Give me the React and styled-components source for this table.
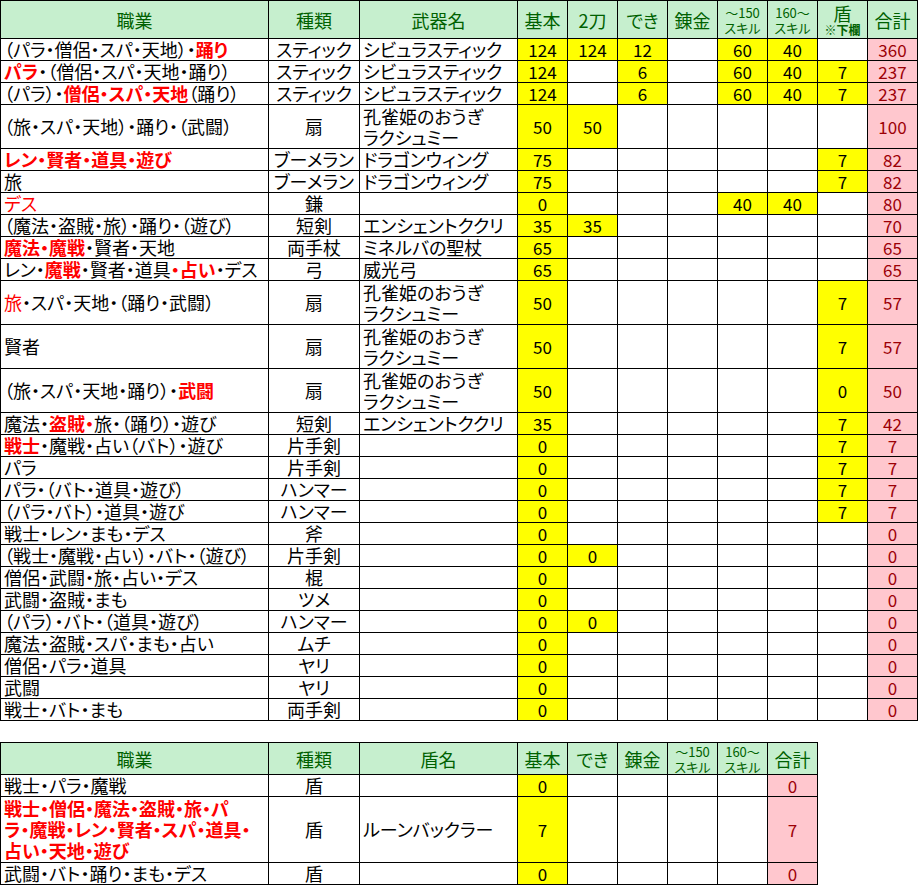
import styled, { createGlobalStyle } from 'styled-components';

const GlobalStyle = createGlobalStyle`
  body {
    margin: 0;
    background: #fff;
    font-family: "Noto Sans CJK JP", "Noto Sans", sans-serif;
    font-feature-settings: "palt";
    color: #000;
  }
`;

const Page = styled.div`
  display: flex;
  flex-direction: column;
  align-items: flex-start;
  gap: 21px;
`;

const Sheet = styled.table`
  border-collapse: collapse;
  table-layout: fixed;
`;

const HeadCell = styled.th`
  background: #c6efce;
  color: #006100;
  font-weight: normal;
  font-size: 18px;
  line-height: 20px;
  height: ${p => p.$h || 38}px;
  box-sizing: border-box;
  padding: 0;
  border: 1px solid #000;
  text-align: center;
  vertical-align: middle;
  white-space: nowrap;
`;

const Small = styled.span`
  display: block;
  font-size: 13px;
  line-height: 15px;
`;

const Note = styled.span`
  display: block;
  font-size: 12px;
  line-height: 14px;
  font-weight: bold;
`;

const fills = {
  yellow: '#ffff00',
  pink: '#ffc7ce',
  white: '#fff',
};

const Cell = styled.td`
  border: 1px solid #000;
  box-sizing: border-box;
  height: ${p => p.$h}px;
  padding: 0 ${p => (p.$align === 'center' ? 0 : 3)}px;
  font-size: 18px;
  line-height: 21px;
  text-align: ${p => p.$align || 'left'};
  vertical-align: middle;
  background: ${p => fills[p.$fill || 'white']};
  white-space: pre;
`;

const NumCell = styled(Cell)`
  font-size: 17px;
  text-align: center;
  padding: 0;
  color: ${p => (p.$total ? '#9c0006' : '#000')};
`;

const Red = styled.span`
  color: #ff0000;
  font-weight: ${p => (p.$thin ? 'normal' : 'bold')};
`;

// **...** = red bold, ~~...~~ = red normal
const Job = ({ text }) => {
  const parts = text.split(/(\*\*[^*]+\*\*|~~[^~]+~~)/);
  return parts.map((p, i) => {
    if (p.startsWith('**')) return <Red key={i}>{p.slice(2, -2)}</Red>;
    if (p.startsWith('~~')) return <Red key={i} $thin>{p.slice(2, -2)}</Red>;
    return p;
  });
};

const KUJAKU = '孔雀姫のおうぎ\nラクシュミー';
const _ = null;

const weapons = [
  { job: '（パラ・僧侶・スパ・天地）・**踊り**', type: 'スティック', name: 'シビュラスティック', v: [124, 124, 12, _, 60, 40, _], total: 360 },
  { job: '**パラ**・（僧侶・スパ・天地・踊り）', type: 'スティック', name: 'シビュラスティック', v: [124, _, 6, _, 60, 40, 7], total: 237 },
  { job: '（パラ）・**僧侶・スパ・天地**（踊り）', type: 'スティック', name: 'シビュラスティック', v: [124, _, 6, _, 60, 40, 7], total: 237 },
  { job: '（旅・スパ・天地）・踊り・（武闘）', type: '扇', name: KUJAKU, v: [50, 50, _, _, _, _, _], total: 100, lines: 2 },
  { job: '**レン・賢者・道具・遊び**', type: 'ブーメラン', name: 'ドラゴンウィング', v: [75, _, _, _, _, _, 7], total: 82 },
  { job: '旅', type: 'ブーメラン', name: 'ドラゴンウィング', v: [75, _, _, _, _, _, 7], total: 82 },
  { job: '~~デス~~', type: '鎌', name: '', v: [0, _, _, _, 40, 40, _], total: 80 },
  { job: '（魔法・盗賊・旅）・踊り・（遊び）', type: '短剣', name: 'エンシェントククリ', v: [35, 35, _, _, _, _, _], total: 70 },
  { job: '**魔法・魔戦**・賢者・天地', type: '両手杖', name: 'ミネルバの聖杖', v: [65, _, _, _, _, _, _], total: 65 },
  { job: 'レン・**魔戦**・賢者・道具**・占い**・デス', type: '弓', name: '威光弓', v: [65, _, _, _, _, _, _], total: 65 },
  { job: '~~旅~~・スパ・天地・（踊り・武闘）', type: '扇', name: KUJAKU, v: [50, _, _, _, _, _, 7], total: 57, lines: 2 },
  { job: '賢者', type: '扇', name: KUJAKU, v: [50, _, _, _, _, _, 7], total: 57, lines: 2 },
  { job: '（旅・スパ・天地・踊り）・**武闘**', type: '扇', name: KUJAKU, v: [50, _, _, _, _, _, 0], total: 50, lines: 2 },
  { job: '魔法・**盗賊・**旅・（踊り）・遊び', type: '短剣', name: 'エンシェントククリ', v: [35, _, _, _, _, _, 7], total: 42 },
  { job: '**戦士**・魔戦・占い（バト）・遊び', type: '片手剣', name: '', v: [0, _, _, _, _, _, 7], total: 7 },
  { job: 'パラ', type: '片手剣', name: '', v: [0, _, _, _, _, _, 7], total: 7 },
  { job: 'パラ・（バト・道具・遊び）', type: 'ハンマー', name: '', v: [0, _, _, _, _, _, 7], total: 7 },
  { job: '（パラ・バト）・道具・遊び', type: 'ハンマー', name: '', v: [0, _, _, _, _, _, 7], total: 7 },
  { job: '戦士・レン・まも・デス', type: '斧', name: '', v: [0, _, _, _, _, _, _], total: 0 },
  { job: '（戦士・魔戦・占い）・バト・（遊び）', type: '片手剣', name: '', v: [0, 0, _, _, _, _, _], total: 0 },
  { job: '僧侶・武闘・旅・占い・デス', type: '棍', name: '', v: [0, _, _, _, _, _, _], total: 0 },
  { job: '武闘・盗賊・まも', type: 'ツメ', name: '', v: [0, _, _, _, _, _, _], total: 0 },
  { job: '（パラ）・バト・（道具・遊び）', type: 'ハンマー', name: '', v: [0, 0, _, _, _, _, _], total: 0 },
  { job: '魔法・盗賊・スパ・まも・占い', type: 'ムチ', name: '', v: [0, _, _, _, _, _, _], total: 0 },
  { job: '僧侶・パラ・道具', type: 'ヤリ', name: '', v: [0, _, _, _, _, _, _], total: 0 },
  { job: '武闘', type: 'ヤリ', name: '', v: [0, _, _, _, _, _, _], total: 0 },
  { job: '戦士・バト・まも', type: '両手剣', name: '', v: [0, _, _, _, _, _, _], total: 0 },
];

const shields = [
  { job: '戦士・パラ・魔戦', type: '盾', name: '', v: [0, _, _, _, _], total: 0 },
  { job: '**戦士・僧侶・魔法・盗賊・旅・パ\nラ・魔戦・レン・賢者・スパ・道具・\n占い・天地・遊び**', type: '盾', name: 'ルーンバックラー', v: [7, _, _, _, _], total: 7, lines: 3 },
  { job: '武闘・バト・踊り・まも・デス', type: '盾', name: '', v: [0, _, _, _, _], total: 0 },
];

const Cols = ({ n }) => (
  <colgroup>
    <col style={{ width: 268 }} />
    <col style={{ width: 91 }} />
    <col style={{ width: 158 }} />
    {Array.from({ length: n }, (_, i) => <col key={i} style={{ width: 50 }} />)}
  </colgroup>
);

const Rows = ({ data }) =>
  data.map((r, i) => {
    const h = 22 * (r.lines || 1);
    return (
      <tr key={i}>
        <Cell $h={h}><Job text={r.job} /></Cell>
        <Cell $h={h} $align="center">{r.type}</Cell>
        <Cell $h={h}>{r.name}</Cell>
        {r.v.map((v, j) => (
          <NumCell key={j} $h={h} $fill={v === null ? 'white' : 'yellow'}>{v}</NumCell>
        ))}
        <NumCell $h={h} $fill="pink" $total>{r.total}</NumCell>
      </tr>
    );
  });

const SkillHead = ({ top, h }) => (
  <HeadCell $h={h}><Small>{top}</Small><Small>スキル</Small></HeadCell>
);

export default function App() {
  return (
    <>
      <GlobalStyle />
      <Page>
        <Sheet>
          <Cols n={8} />
          <thead>
            <tr>
              <HeadCell>職業</HeadCell>
              <HeadCell>種類</HeadCell>
              <HeadCell>武器名</HeadCell>
              <HeadCell>基本</HeadCell>
              <HeadCell>2刀</HeadCell>
              <HeadCell>でき</HeadCell>
              <HeadCell>錬金</HeadCell>
              <SkillHead top="～150" />
              <SkillHead top="160～" />
              <HeadCell>盾<Note>※下欄</Note></HeadCell>
              <HeadCell>合計</HeadCell>
            </tr>
          </thead>
          <tbody>
            <Rows data={weapons} />
          </tbody>
        </Sheet>

        <Sheet>
          <Cols n={6} />
          <thead>
            <tr>
              <HeadCell $h={32}>職業</HeadCell>
              <HeadCell $h={32}>種類</HeadCell>
              <HeadCell $h={32}>盾名</HeadCell>
              <HeadCell $h={32}>基本</HeadCell>
              <HeadCell $h={32}>でき</HeadCell>
              <HeadCell $h={32}>錬金</HeadCell>
              <SkillHead h={32} top="～150" />
              <SkillHead h={32} top="160～" />
              <HeadCell $h={32}>合計</HeadCell>
            </tr>
          </thead>
          <tbody>
            <Rows data={shields} />
          </tbody>
        </Sheet>
      </Page>
    </>
  );
}
